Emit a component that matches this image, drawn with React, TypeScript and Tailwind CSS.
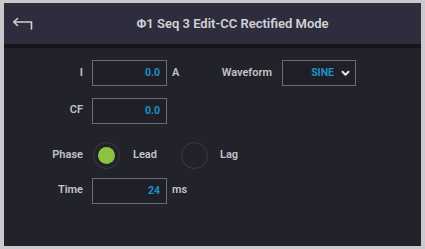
import React from "react";

const Label = ({ children, w = "w-[79px]" }: { children: React.ReactNode; w?: string }) => (
  <div className={`${w} text-right text-[11px] font-semibold text-[#c4c4c8]`}>{children}</div>
);

const Box = ({ value }: { value: string }) => (
  <div className="w-[75px] h-[26px] border-[1.5px] border-[#6c6c74] bg-[#1f1f27] flex items-center justify-end pr-[6px] text-[10.5px] font-bold text-[#1e8fc6]">
    {value}
  </div>
);

export default function App() {
  return (
    <div
      className="w-[425px] h-[249px] bg-[#cacacc] pt-[3px] pl-[4px] pr-[4px] pb-[3px]"
      style={{ fontFamily: "Roboto, 'Liberation Sans', sans-serif" }}
    >
      <div className="w-full h-full flex flex-col bg-[#22222b]">
        <div className="h-[41px] bg-[#2e2d3e] flex items-center relative">
          <svg
            className="absolute left-[8px] top-[13px]"
            width="24"
            height="18"
            viewBox="0 0 24 18"
            fill="none"
            stroke="#cfcfd4"
            strokeWidth="1.6"
            strokeLinecap="round"
            strokeLinejoin="round"
          >
            <path d="M5.5 2.5 L1.8 6 L5.5 9.5" />
            <path d="M2 6 H19.5 V13" />
          </svg>
          <div className="w-full text-center text-[13px] font-semibold text-[#d2d2d6] pl-[40px]">
            Φ1 Seq 3 Edit-CC Rectified Mode
          </div>
        </div>
        <div className="h-[4px] bg-[#15151c]" />
        <div className="flex flex-col pt-[12px]">
          <div className="flex items-center h-[26px]">
            <Label>I</Label>
            <div className="ml-[9px]">
              <Box value="0.0" />
            </div>
            <div className="w-[105px] flex items-center justify-between text-[11px] font-semibold text-[#c4c4c8]">
              <span className="pl-[5px]">A</span>
              <span>Waveform</span>
            </div>
            <div className="ml-[10px] w-[74px] h-[26px] border-[1.5px] border-[#6c6c74] bg-[#1f1f27] flex items-center justify-end pr-[5px] gap-[7px]">
              <span className="text-[10.5px] font-bold text-[#1e8fc6]">SINE</span>
              <svg width="9" height="7" viewBox="0 0 9 7" fill="none" stroke="#e8e8ec" strokeWidth="2" strokeLinecap="round" strokeLinejoin="round">
                <path d="M1.5 1.8 L4.5 4.8 L7.5 1.8" />
              </svg>
            </div>
          </div>
          <div className="flex items-center h-[27px] mt-[11px]">
            <Label>CF</Label>
            <div className="ml-[9px]">
              <Box value="0.0" />
            </div>
          </div>
          <div className="flex items-center h-[26px] mt-[18px]">
            <Label>Phase</Label>
            <div className="ml-[10px] w-[27px] h-[27px] rounded-full border-[1.5px] border-[#3c3c47] flex items-center justify-center">
              <div className="w-[17px] h-[17px] rounded-full bg-[#8cc43f]" />
            </div>
            <span className="ml-[13px] text-[11px] font-semibold text-[#c4c4c8]">Lead</span>
            <div className="ml-[24px] w-[27px] h-[27px] rounded-full border-[1.5px] border-[#3c3c47]" />
            <span className="ml-[12px] text-[11px] font-semibold text-[#c4c4c8]">Lag</span>
          </div>
          <div className="flex items-center h-[27px] mt-[9px]">
            <Label>Time</Label>
            <div className="ml-[9px]">
              <Box value="24" />
            </div>
            <span className="ml-[5px] text-[11px] font-semibold text-[#c4c4c8]">ms</span>
          </div>
        </div>
      </div>
    </div>
  );
}
